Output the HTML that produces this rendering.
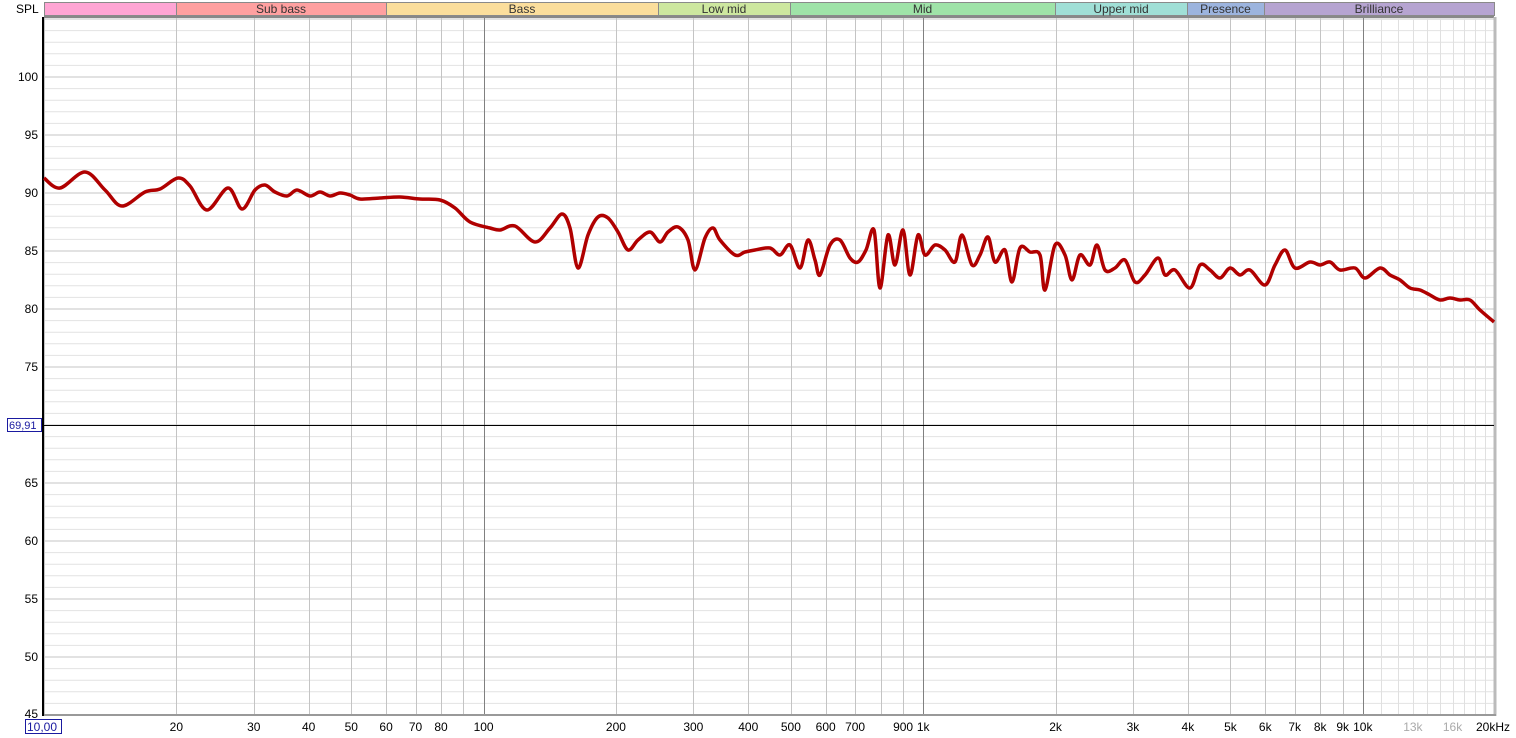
<!DOCTYPE html>
<html><head><meta charset="utf-8"><style>
html,body{margin:0;padding:0;background:#fff;width:1516px;height:738px;overflow:hidden}
svg{display:block}
text{font-family:"Liberation Sans",sans-serif;font-size:12px}
</style></head><body>
<svg id="s" width="1516" height="738" xmlns="http://www.w3.org/2000/svg"></svg>
<script>
const s=document.getElementById('s');
let h='';
const X0=44,X1=1494,dec=439.6;
const fx=f=>X0+dec*Math.log10(f/10);
const dy=v=>77+(100-v)*11.6;
// bands
const bands=[[44,176,'#ffa5d4',''],[176,386,'#ffa0a0','Sub bass'],[386,658,'#fbde9c','Bass'],[658,790,'#cde79f','Low mid'],[790,1055,'#9fe3a8','Mid'],[1055,1187,'#a0dfd6','Upper mid'],[1187,1264,'#9cb4de','Presence'],[1264,1494,'#b6a4d1','Brilliance']];
for(const b of bands){h+=`<rect x="${b[0]+.5}" y="2.5" width="${b[1]-b[0]}" height="13" fill="${b[2]}" stroke="#8a8a8a"/>`;
if(b[3])h+=`<text x="${(b[0]+b[1])/2}" y="13" text-anchor="middle" fill="#333">${b[3]}</text>`;}
h+=`<text x="16" y="13" fill="#000">SPL</text>`;
// horizontal grid
for(let v=45;v<=105;v++){const y=dy(v);if(y<17)continue;h+=`<line x1="44" x2="1494" y1="${y.toFixed(1)}" y2="${y.toFixed(1)}" stroke="${v%5==0?'#c4c4c4':'#e2e2e2'}" stroke-width="1"/>`;}
// vertical grid
const freqs=[];for(let d=10;d<=10000;d*=10)for(let k=1;k<=9;k++)freqs.push(d*k);
for(let k=11;k<=20;k++)freqs.push(k*1000);
for(const f of freqs){const x=Math.round(fx(f))+.5;const major=(f==100||f==1000||f==10000);
let c=major?'#808080':(f>10000?'#e0e0e0':'#c4c4c4');h+=`<line x1="${x}" x2="${x}" y1="17" y2="714" stroke="${c}"/>`;}
// y labels
for(let v=50;v<=100;v+=5){if(v==70)continue;h+=`<text x="38" y="${dy(v)+4}" text-anchor="end">${v}</text>`;}
h+=`<text x="38" y="718" text-anchor="end">45</text>`;
// x labels
const xl=[[20,'20'],[30,'30'],[40,'40'],[50,'50'],[60,'60'],[70,'70'],[80,'80'],[100,'100'],[200,'200'],[300,'300'],[400,'400'],[500,'500'],[600,'600'],[700,'700'],[900,'900'],[1000,'1k'],[2000,'2k'],[3000,'3k'],[4000,'4k'],[5000,'5k'],[6000,'6k'],[7000,'7k'],[8000,'8k'],[9000,'9k'],[10000,'10k']];
for(const [f,t] of xl)h+=`<text x="${fx(f)}" y="731" text-anchor="middle">${t}</text>`;
h+=`<text x="${fx(13000)}" y="731" text-anchor="middle" fill="#aaa">13k</text><text x="${fx(16000)}" y="731" text-anchor="middle" fill="#aaa">16k</text><text x="1476" y="731" fill="#000">20kHz</text>`;
// frame
h+=`<line x1="44" x2="1494" y1="17" y2="17" stroke="#888" stroke-width="2"/>`;
h+=`<line x1="1495" x2="1495" y1="17" y2="716" stroke="#bbb" stroke-width="3"/>`;
h+=`<line x1="43" x2="1496" y1="715" y2="715" stroke="#999" stroke-width="2"/>`;
h+=`<line x1="43" x2="43" y1="17" y2="716" stroke="#000" stroke-width="2"/>`;
// 69.91 line
h+=`<line x1="44" x2="1494" y1="425.5" y2="425.5" stroke="#000"/>`;
h+=`<rect x="7.5" y="418.5" width="34" height="13" fill="#fff" stroke="#1a1aa0"/><text x="9" y="429" fill="#1a1aa0" style="font-size:11px">69,91</text>`;
h+=`<rect x="25.5" y="719.5" width="36" height="14" fill="#fff" stroke="#1a1aa0"/><text x="27" y="731" fill="#1a1aa0">10,00</text>`;
// curve
const p=[[44,178],[60,188],[85,172],[105,190],[122,206],[145,192],[160,189],[178,178],[190,186],[207,210],[228,188],[242,209],[255,190],[265,185],[275,192],[287,196],[297,190],[310,196],[320,192],[330,196],[340,193],[350,195],[360,199],[380,198],[400,197],[420,199],[440,200],[455,208],[470,222],[490,228],[500,230],[515,226],[535,242],[550,228],[562,214],[570,228],[578,268],[588,235],[598,217],[608,218],[618,232],[628,250],[638,240],[650,232],[660,242],[668,232],[678,227],[688,240],[695,270],[705,238],[713,228],[720,240],[735,255],[745,252],[755,250],[770,248],[780,255],[790,245],[800,268],[808,240],[815,260],[820,275],[830,245],[840,240],[850,258],[858,262],[866,250],[874,230],[880,288],[888,235],[895,265],[903,230],[910,275],[918,235],[925,255],[935,245],[945,250],[955,262],[962,235],[972,265],[980,255],[988,237],[995,262],[1005,250],[1012,282],[1020,248],[1030,252],[1040,255],[1045,290],[1055,245],[1065,255],[1072,280],[1080,255],[1090,265],[1097,245],[1105,270],[1115,268],[1125,260],[1135,282],[1145,275],[1158,258],[1165,275],[1175,270],[1190,288],[1200,265],[1210,270],[1220,278],[1230,268],[1240,275],[1250,270],[1265,285],[1275,265],[1285,250],[1295,268],[1310,262],[1320,265],[1330,262],[1340,270],[1355,268],[1365,278],[1380,268],[1390,275],[1400,280],[1410,288],[1420,290],[1430,295],[1440,300],[1450,298],[1460,300],[1470,300],[1480,310],[1494,322]];
let d=`M${p[0][0]},${p[0][1]}`;
for(let i=0;i<p.length-1;i++){const a=p[Math.max(0,i-1)],b=p[i],c=p[i+1],e=p[Math.min(p.length-1,i+2)];
d+=` C${(b[0]+(c[0]-a[0])/6).toFixed(1)},${(b[1]+(c[1]-a[1])/6).toFixed(1)} ${(c[0]-(e[0]-b[0])/6).toFixed(1)},${(c[1]-(e[1]-b[1])/6).toFixed(1)} ${c[0]},${c[1]}`;}
h+=`<path d="${d}" fill="none" stroke="#b00000" stroke-width="3.5" stroke-linejoin="round"/>`;
s.innerHTML=h;
</script>
</body></html>
